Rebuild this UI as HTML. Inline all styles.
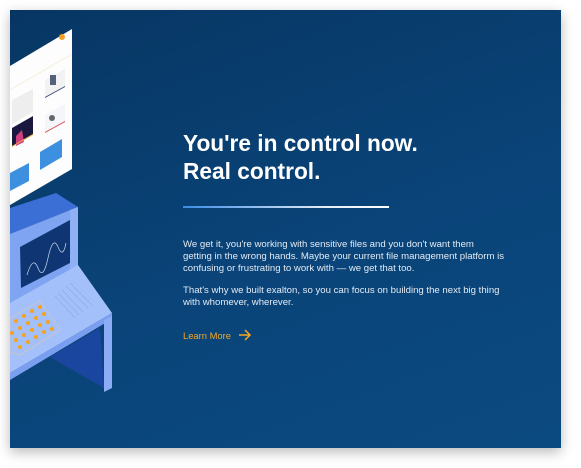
<!DOCTYPE html>
<html><head><meta charset="utf-8"><style>
html,body{margin:0;padding:0;background:#fff;width:581px;height:468px;overflow:hidden}
.card{position:absolute;left:10px;top:10px;width:551px;height:438px;background:linear-gradient(160deg,#073663 0%,#0a4479 55%,#0b4a80 100%);box-shadow:0 4px 12px rgba(0,0,0,.28);overflow:hidden}
h1{position:absolute;left:173px;top:119px;margin:0;font:bold 22.7px/28px "Liberation Sans",sans-serif;color:#fff}
.line{position:absolute;left:173px;top:196px;width:206px;height:2px;background:linear-gradient(90deg,#3d8ce6,#e8eef6 70%,#fff)}
p{position:absolute;left:173px;margin:0;font:9.6px/12px "Liberation Sans",sans-serif;color:#e4ebf3;white-space:nowrap}
.lm{position:absolute;left:173px;top:320px;font:9.4px "Liberation Sans",sans-serif;color:#f5a623}
</style></head><body>
<div class="card">
<svg width="551" height="438" style="position:absolute;left:0;top:0">
<g transform="translate(-10,-10)">
<polygon points="10,66 72,29 72,169 10,205" fill="#fdfdfd"/>
<line x1="10" y1="90" x2="72" y2="54" stroke="#f3dcb0" stroke-width="0.5"/>
<polygon points="12,100 33,89 33,112 12,124" fill="#eeeeee"/>
<polygon points="45,80 65,69 65,86 45,97" fill="#f2f2f2"/>
<rect x="50" y="75" width="6" height="10" fill="#55607a"/>
<polygon points="45,97 65,86 65,87 45,98" fill="#3a4a7a"/>
<polygon points="12,128 33,116 33,134 12,146" fill="#1b1840"/>
<polygon points="16,136 22,130 24,142 16,146" fill="#d04080"/>
<polygon points="12,146 33,134 33,135 12,147" fill="#f0b030"/>
<polygon points="45,115 65,104 65,121 45,132" fill="#f4f6fa"/>
<circle cx="52" cy="118" r="3" fill="#666"/>
<polygon points="45,132 65,121 65,122 45,133" fill="#e04050"/>
<polygon points="10,173 29,163 29,181 10,191" fill="#3d8fe0"/>
<polygon points="40,152 62,139 62,157 40,170" fill="#3d8fe0"/>
<circle cx="62" cy="37" r="3" fill="#f0a020"/>
<polygon points="10,208 56,193 78,207 10,234" fill="#3c6fd6"/>
<polygon points="10,234 78,207 78,266 10,305" fill="#7fa4f1"/>
<polygon points="70,210 78,207 78,266 70,270" fill="#8fb0f5"/>
<polygon points="20,247 70,220 70,263 21,288" fill="#0f3672"/>
<path d="M27,275 Q33,255 38,268 T48,258 T58,247 T66,243" fill="none" stroke="#c9d6f0" stroke-width="0.7"/>
<polygon points="10,303 78,265 112,313 10,373" fill="#a4c0fa"/>
<polygon points="10,373 112,313 112,319 10,380" fill="#7b9ff0"/>
<polygon points="50,357 100,328 104,388" fill="#1a46a0"/>
<polygon points="104,320 112,316 112,388 104,392" fill="#8cacf5"/>
<g stroke="#7f97d8" stroke-width="0.5">
<line x1="55" y1="296" x2="75" y2="318"/><line x1="58" y1="293" x2="79" y2="315"/><line x1="62" y1="290" x2="83" y2="312"/><line x1="66" y1="286" x2="88" y2="308"/><line x1="70" y1="283" x2="92" y2="305"/>
</g>
<polygon points="10,318 40,301 60,330 20,355 10,352" fill="none" stroke="#d8c8b0" stroke-width="0.6"/>
<g fill="#f7a21a">
<circle cx="40" cy="307" r="2"/><circle cx="44" cy="314" r="2"/><circle cx="48" cy="322" r="2"/><circle cx="52" cy="329" r="2"/>
<circle cx="32" cy="311" r="2"/><circle cx="36" cy="318" r="2"/><circle cx="40" cy="325" r="2"/><circle cx="44" cy="332" r="2"/>
<circle cx="24" cy="316" r="2"/><circle cx="28" cy="323" r="2"/><circle cx="32" cy="330" r="2"/><circle cx="36" cy="337" r="2"/>
<circle cx="16" cy="321" r="2"/><circle cx="20" cy="328" r="2"/><circle cx="24" cy="335" r="2"/><circle cx="28" cy="342" r="2"/>
<circle cx="12" cy="333" r="2"/><circle cx="16" cy="340" r="2"/><circle cx="20" cy="347" r="2"/>
</g>
</g>
</svg>
<h1>You're in control now.<br>Real control.</h1>
<div class="line"></div>
<p style="top:229px">We get it, you're working with sensitive files and you don't want them<br>getting in the wrong hands. Maybe your current file management platform is<br>confusing or frustrating to work with — we get that too.</p>
<p style="top:275px">That's why we built exalton, so you can focus on building the next big thing<br>with whomever, wherever.</p>
<div class="lm">Learn More</div>
<svg style="position:absolute;left:228px;top:319px" width="14" height="12"><path d="M1,6 H12 M7,1 L12,6 L7,11" fill="none" stroke="#f5a623" stroke-width="1.5"/></svg>
</div>
</body></html>
